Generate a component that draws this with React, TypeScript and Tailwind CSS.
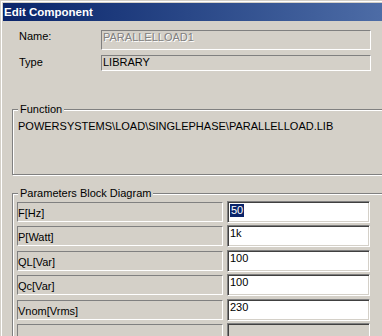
import React from "react";

type Param = { label: string; value: string; selected?: boolean };

const PARAMS: Param[] = [
  { label: "F[Hz]", value: "50", selected: true },
  { label: "P[Watt]", value: "1k" },
  { label: "QL[Var]", value: "100" },
  { label: "Qc[Var]", value: "100" },
  { label: "Vnom[Vrms]", value: "230" },
];

// row spacing alternates a bit to keep the 24.4px pitch
const ROW_GAPS = ["mt-0", "mt-[2px]", "mt-[3px]", "mt-[2px]", "mt-[3px]", "mt-[2px]"];

const font = "font-['Liberation_Sans',Arial,sans-serif] text-[11px] leading-[11px]";

function GroupBox({
  title,
  className,
  children,
}: {
  title: string;
  className: string;
  children: React.ReactNode;
}) {
  return (
    <div
      className={`relative ml-[9px] w-[420px] border border-[#808080] shadow-[inset_1px_1px_0_#fff,1px_1px_0_#fff] ${className}`}
    >
      <span className="absolute -top-[6px] left-[5px] bg-[#d4d0c8] px-[2px] text-black">
        {title}
      </span>
      {children}
    </div>
  );
}

function ParamRow({ p }: { p: Param | null }) {
  return (
    <div className="flex h-[22px] items-center">
      <div className="h-[20px] w-[206px] border-t border-l border-[#808080] border-r border-b border-r-white border-b-white pt-[4px] leading-[12px] text-black">
        {p?.label}
      </div>
      <div
        className={`ml-[4px] h-[22px] w-[143px] border-t border-l border-[#808080] border-r border-b border-r-white border-b-white pl-[1px] shadow-[inset_1px_1px_0_#404040,inset_-1px_-1px_0_#d4d0c8] pt-[2px] ${
          p ? "bg-white" : "bg-[#d4d0c8]"
        }`}
      >
        {p &&
          (p.selected ? (
            <span className="ml-[1px] inline-block bg-[#0a246a] px-[1px] py-[1px] text-white">{p.value}</span>
          ) : (
            <span className="ml-[1px] text-black">{p.value}</span>
          ))}
      </div>
    </div>
  );
}

export default function App() {
  const rows: (Param | null)[] = [...PARAMS, null];

  return (
    <div className={`h-[336px] w-[382px] overflow-hidden bg-[#d4d0c8] pt-px pl-px ${font}`}>
      <div className="h-full border-t border-l border-white pt-px pl-px">
        <div className="flex h-[18px] items-center bg-gradient-to-r from-[#0a246a] to-[#4d6ca6] pl-[1px] text-[11.5px] font-bold text-white">
          Edit Component
        </div>

        <div className="mt-[9px] flex items-start">
          <div className="ml-[16px] w-[82px] pt-[1px] text-black">Name:</div>
          <div className="h-[20px] w-[270px] border-t border-l border-[#808080] border-r border-b border-r-white border-b-white pl-[1px] pt-[1px] text-[#808080] [text-shadow:1px_1px_0_#fff]">
            PARALLELLOAD1
          </div>
        </div>

        <div className="mt-[5px] flex items-start">
          <div className="ml-[16px] w-[82px] pt-[2px] text-black">Type</div>
          <div className="h-[16px] w-[270px] border-t border-l border-[#808080] border-r border-b border-r-white border-b-white pl-[1px] pt-[1px] text-black">
            LIBRARY
          </div>
        </div>

        <GroupBox title="Function" className="mt-[38px] h-[66px]">
          <div className="pl-[5px] pt-[11px] text-black">
            POWERSYSTEMS\LOAD\SINGLEPHASE\PARALLELLOAD.LIB
          </div>
        </GroupBox>

        <GroupBox title="Parameters Block Diagram" className="mt-[18px] h-[200px]">
          <div className="pl-[4px] pt-[7px]">
            {rows.map((p, i) => (
              <div key={i} className={ROW_GAPS[i]}>
                <ParamRow p={p} />
              </div>
            ))}
          </div>
        </GroupBox>
      </div>
    </div>
  );
}
